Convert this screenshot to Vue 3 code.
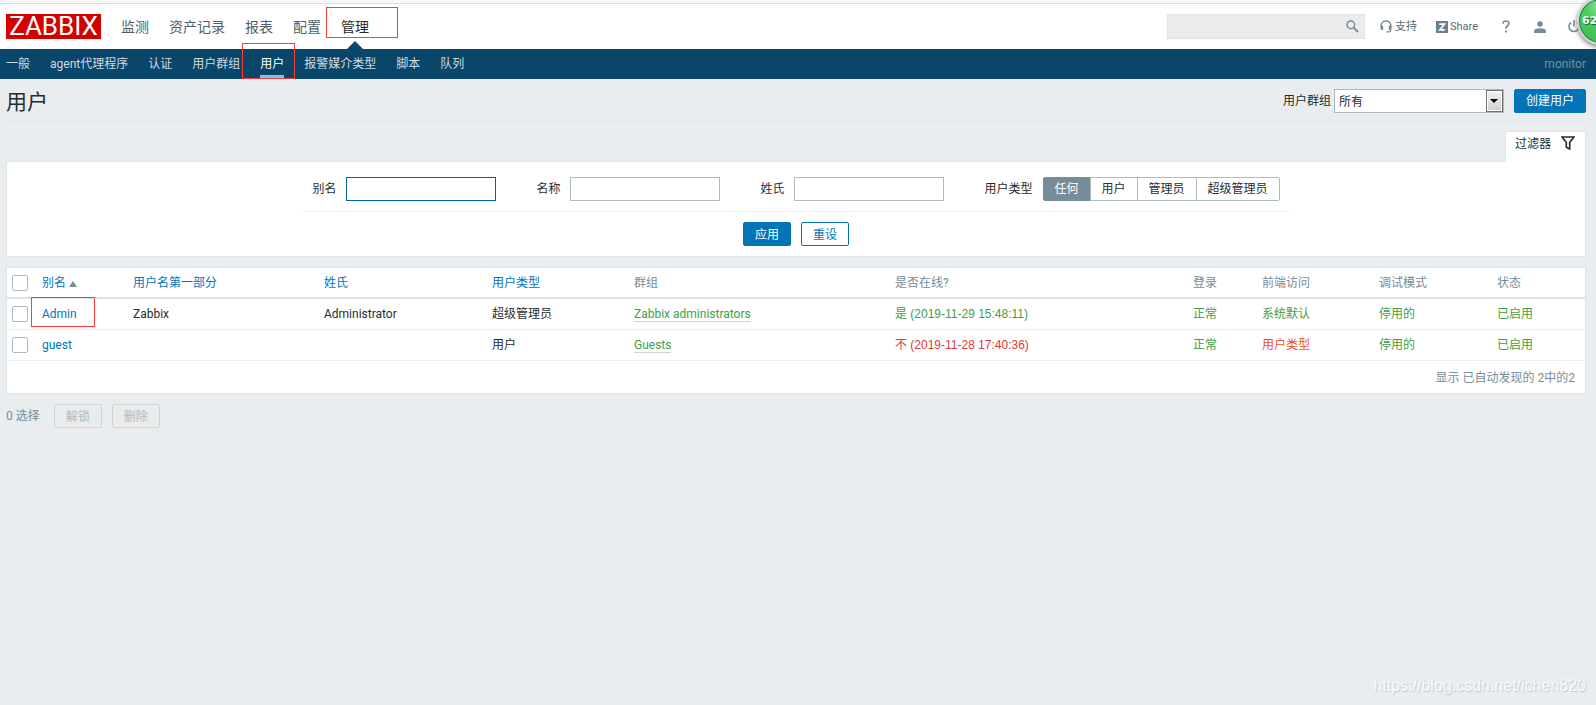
<script setup>
import { ref, computed } from 'vue'

const mainMenu = ['监测', '资产记录', '报表', '配置', '管理']
const subMenu = ['一般', 'agent代理程序', '认证', '用户群组', '用户', '报警媒介类型', '脚本', '队列']
const userTypes = ['任何', '用户', '管理员', '超级管理员']
const textFilters = [
  { id: 'alias', label: '别名' },
  { id: 'name', label: '名称' },
  { id: 'surname', label: '姓氏' },
]
const users = [
  {
    alias: 'Admin', name: 'Zabbix', surname: 'Administrator', type: '超级管理员',
    group: 'Zabbix administrators', online: true, onlineText: '是 (2019-11-29 15:48:11)',
    login: '正常', access: '系统默认', accessClass: 'green', debug: '停用的', status: '已启用', marked: true,
  },
  {
    alias: 'guest', name: '', surname: '', type: '用户',
    group: 'Guests', online: false, onlineText: '不 (2019-11-28 17:40:36)',
    login: '正常', access: '用户类型', accessClass: 'orange', debug: '停用的', status: '已启用', marked: false,
  },
]

const search = ref('')
const filters = ref({ alias: '', name: '', surname: '' })
const userType = ref('任何')
const selected = ref([])
const allSelected = computed({
  get: () => selected.value.length === users.length,
  set: (on) => { selected.value = on ? users.map((u) => u.alias) : [] },
})
function reset() {
  filters.value = { alias: '', name: '', surname: '' }
  userType.value = '任何'
}
</script>

<template>
  <div class="page">
    <div class="strip"></div>
    <header class="header">
      <a href="#" class="logo" aria-label="ZABBIX"><span>ZABBIX</span></a>
      <nav class="main-nav">
        <a v-for="item in mainMenu" :key="item" href="#" :class="{ active: item === '管理' }">{{ item }}<i v-if="item === '管理'" class="mark mark-main"></i></a>
      </nav>
      <div class="tools">
        <form class="search" @submit.prevent>
          <input v-model="search" type="text" aria-label="搜索">
          <button type="submit" aria-label="搜索">
            <svg width="13" height="13" viewBox="0 0 13 13" fill="none" stroke="#768d99"><circle cx="4.8" cy="4.8" r="3.8" stroke-width="1.4" /><path d="M7.6 7.6 12 12" stroke-width="2" /></svg>
          </button>
        </form>
        <a href="#" class="tool support">
          <svg width="12" height="13" viewBox="0 0 12 13"><path d="M1.2 7V5.6C1.2 2.9 3.3 1 6 1s4.8 1.9 4.8 4.6V7" fill="none" stroke="#768d99" stroke-width="1.5" /><path d="M.5 5.8h2.700v4.200H2Q.5 10 .5 8.600zM11.5 5.8h-2.700v4.200H10q1.5 0 1.5-1.400z" fill="#768d99" /><path d="M10.8 9v1.2q0 1.6-2 1.600H6.500" fill="none" stroke="#768d99" stroke-width="1.2" /></svg>
          支持
        </a>
        <a href="#" class="tool share">
          <svg width="12" height="12" viewBox="0 0 12 12"><rect width="12" height="12" fill="#68818e" /><path d="M3.2 3.2h5.2L3.8 8.9h5.1" fill="none" stroke="#fff" stroke-width="1.7" /></svg>
          Share
        </a>
        <a href="#" class="tool help" aria-label="帮助">
          <svg width="8" height="13" viewBox="0 0 8 13" fill="none" stroke="#768d99" stroke-width="1.7"><path d="M1 3.8C1 2 2.200 1 3.900 1s3 .9 3 2.600c0 2.200-2.900 2.200-2.900 4.600v.6" /><path d="M3 11.500h2" stroke-width="2" /></svg>
        </a>
        <a href="#" class="tool user" aria-label="用户资料">
          <svg width="12" height="12" viewBox="0 0 12 12" fill="#768d99"><circle cx="6" cy="3" r="2.800" /><path d="M0 12V10.300Q0 7.300 6 7.300T12 10.300V12z" /></svg>
        </a>
        <a href="#" class="tool power" aria-label="退出">
          <svg width="12" height="13" viewBox="0 0 12 13" fill="none" stroke="#768d99" stroke-width="1.600"><path d="M3 2.500a5 5 0 1 0 6 0M6 0v6.500" /></svg>
        </a>
      </div>
      <div class="bubble"><span>62</span></div>
    </header>

    <nav class="sub-nav">
      <a v-for="item in subMenu" :key="item" href="#" :class="{ active: item === '用户' }">{{ item }}<i v-if="item === '用户'" class="mark mark-sub"></i></a>
      <span class="server">monitor</span>
    </nav>

    <main class="content">
      <div class="title-bar">
        <h1>用户</h1>
        <form class="title-tools" @submit.prevent>
          <label for="group">用户群组</label>
          <span class="select">
            <select id="group"><option>所有</option></select>
            <i class="drop"></i>
          </span>
          <button type="button" class="btn primary create">创建用户</button>
        </form>
      </div>

      <div class="tab-row">
        <button type="button" class="filter-tab">
          过滤器
          <svg width="14" height="14" viewBox="0 0 14 14" fill="none" stroke="#1f2c33" stroke-width="1.600"><path d="M1 1h12L8.700 6.300V13L5.300 11.300V6.300z" /></svg>
        </button>
      </div>
      <form class="filter" @submit.prevent @reset.prevent="reset">
        <div class="fields">
          <div v-for="f in textFilters" :key="f.id" class="field">
            <label :for="f.id">{{ f.label }}</label>
            <input :id="f.id" v-model="filters[f.id]" type="text" :class="{ current: f.id === 'alias' }">
          </div>
          <div class="field" role="radiogroup" aria-labelledby="type-label">
            <span id="type-label" class="label">用户类型</span>
            <div class="segments">
              <label v-for="t in userTypes" :key="t"><input v-model="userType" type="radio" name="type" :value="t"><span>{{ t }}</span></label>
            </div>
          </div>
        </div>
        <div class="filter-buttons">
          <button type="submit" class="btn primary">应用</button>
          <button type="reset" class="btn">重设</button>
        </div>
      </form>

      <div class="table-box">
        <table>
          <colgroup>
            <col class="c-check"><col class="c-alias"><col class="c-name"><col class="c-surname"><col class="c-type"><col class="c-group"><col class="c-online"><col class="c-login"><col class="c-access"><col class="c-debug"><col class="c-status">
          </colgroup>
          <thead>
            <tr>
              <th class="check"><input v-model="allSelected" type="checkbox" aria-label="全选"></th>
              <th><a href="#">别名<i class="sort"></i></a></th>
              <th><a href="#">用户名第一部分</a></th>
              <th><a href="#">姓氏</a></th>
              <th><a href="#">用户类型</a></th>
              <th>群组</th>
              <th>是否在线?</th>
              <th>登录</th>
              <th>前端访问</th>
              <th>调试模式</th>
              <th>状态</th>
            </tr>
          </thead>
          <tbody>
            <tr v-for="u in users" :key="u.alias">
              <td class="check"><input v-model="selected" type="checkbox" :value="u.alias" :aria-label="u.alias"></td>
              <td class="alias"><a href="#">{{ u.alias }}</a><i v-if="u.marked" class="mark mark-row"></i></td>
              <td>{{ u.name }}</td>
              <td>{{ u.surname }}</td>
              <td>{{ u.type }}</td>
              <td><a href="#" class="green dotted">{{ u.group }}</a></td>
              <td class="time" :class="u.online ? 'green' : 'red'">{{ u.onlineText }}</td>
              <td class="green">{{ u.login }}</td>
              <td><a href="#" :class="u.accessClass">{{ u.access }}</a></td>
              <td><a href="#" class="green">{{ u.debug }}</a></td>
              <td class="green">{{ u.status }}</td>
            </tr>
          </tbody>
        </table>
        <div class="table-foot">显示 已自动发现的 2中的2</div>
      </div>

      <div class="actions">
        <span>{{ selected.length }} 选择</span>
        <button type="button" class="btn" :disabled="!selected.length">解锁</button>
        <button type="button" class="btn" :disabled="!selected.length">删除</button>
      </div>
    </main>
    <div class="watermark">https://blog.csdn.net/ichen820</div>
  </div>
</template>

<style>
body { background: #e9edf0; }
</style>

<style scoped>
.page, .page * { box-sizing: border-box; }
.page {
  position: relative;
  min-height: 100vh;
  overflow: hidden;
  background: #e9edf0;
  color: #1f2c33;
  font: 12px/16px Roboto, "Noto Sans CJK SC", sans-serif;
}
a { color: #0275b8; text-decoration: none; }
input, select, button { font: inherit; color: inherit; margin: 0; outline: none; }
button { cursor: pointer; }
svg { display: block; flex: none; }

.strip { height: 4px; background: #f8f8f8; border-bottom: 1px solid #ddd; }
.header {
  position: relative;
  display: flex;
  align-items: center;
  height: 45px;
  padding: 0 16px 0 6px;
  background: #fff;
}
.logo {
  display: flex;
  align-items: center;
  justify-content: center;
  width: 95px;
  height: 25px;
  background: #d40000;
  color: #fff;
  font: 26px/25px Roboto, sans-serif;
}
.main-nav { display: flex; gap: 20px; height: 100%; margin-left: 20px; }
.main-nav a { position: relative; color: #4f5f68; font-size: 14px; line-height: 46px; }
.main-nav .active { color: #1f2c33; }
.main-nav .active::after {
  content: "";
  position: absolute;
  left: 50%;
  bottom: 0;
  margin-left: -8px;
  border: 8px solid transparent;
  border-top: 0;
  border-bottom-color: #0a466a;
}
.mark { position: absolute; z-index: 2; border: 1px solid #fb3c3c; pointer-events: none; }
.mark-main { left: -15px; top: 3px; width: 72px; height: 31px; }
.mark-sub { left: -18px; top: -6px; width: 53px; height: 36px; }
.mark-row { left: -6px; top: -2px; width: 64px; height: 30px; }

.tools { display: flex; align-items: center; margin-left: auto; font-size: 11px; }
.search {
  display: flex;
  align-items: center;
  width: 198px;
  height: 25px;
  background: #ebebeb;
  border: 1px solid #dfe4e7;
}
.search input { flex: 1; min-width: 0; border: 0; background: none; padding: 0 6px; }
.search button { border: 0; background: none; padding: 0 5px; }
.tool { display: flex; align-items: center; gap: 3px; color: #586a74; }
.support { margin-left: 15px; }
.share { margin-left: 19px; gap: 2px; }
.help { margin-left: 24px; }
.user { margin-left: 24px; }
.power { margin-left: 22px; }
.bubble {
  position: absolute;
  right: -29px;
  top: -7px;
  width: 48px;
  height: 48px;
  padding-left: 3px;
  border-radius: 50%;
  border: 2px solid #cfd3d1;
  background: radial-gradient(circle at 50% 20%, #9be59a 0, #4fca5f 35%, #37bb52 100%);
  box-shadow: inset 0 0 0 1px #148044, 0 2px 5px #777;
  color: #fff;
  font: bold 11px/44px "DejaVu Sans", sans-serif;
  text-shadow: 1px 1px 1px #12662d;
  z-index: 3;
}

.sub-nav {
  display: flex;
  gap: 20px;
  height: 30px;
  padding: 0 10px 0 6px;
  background: #0a466a;
  line-height: 30px;
}
.sub-nav a { position: relative; color: #d0dbe1; }
.sub-nav .active { color: #fff; }
.sub-nav .active::after {
  content: "";
  position: absolute;
  inset: auto 0 1px;
  height: 3px;
  background: #7dc3f2;
}
.server { margin-left: auto; color: #768d99; }

.content { padding: 0 10px 0 6px; }
.title-bar {
  display: flex;
  align-items: flex-start;
  justify-content: space-between;
  height: 43px;
  padding-top: 10px;
  border-bottom: 1px solid #dfe4e7;
}
h1 { margin: 0; font-size: 21px; line-height: 26px; font-weight: 400; }
.title-tools { display: flex; align-items: center; }
.title-tools label { line-height: 24px; }
.select { position: relative; margin: 0 10px 0 3px; }
.select select {
  display: block;
  width: 170px;
  height: 24px;
  padding: 2px 20px 0 4px;
  appearance: none;
  border: 1px solid #acbbc2;
  border-radius: 0;
  background: #fff;
}
.drop {
  position: absolute;
  top: 1px;
  right: 1px;
  display: grid;
  place-items: center;
  width: 17px;
  height: 22px;
  border: 1px solid #707070;
  background: linear-gradient(#f2f2f2, #cfcfcf);
  box-shadow: inset 0 0 0 1px #fff;
  pointer-events: none;
}
.drop::after { content: ""; border: 4px solid transparent; border-top-color: #000; border-bottom: 0; }
.btn {
  height: 24px;
  padding: 1px 11px 0;
  border: 1px solid #0275b8;
  border-radius: 2px;
  background: #fff;
  color: #0275b8;
  line-height: 22px;
}
.btn.primary { background: #0275b8; color: #fff; }
.btn.create { padding-top: 0; }
.btn:disabled { background: #ebebeb; border-color: #ccd5d9; color: #acbbc2; }

.tab-row { display: flex; justify-content: flex-end; padding-top: 9px; }
.filter-tab {
  position: relative;
  display: flex;
  align-items: flex-start;
  gap: 10px;
  height: 31px;
  margin-bottom: -1px;
  padding: 4px 10px 0 9px;
  border: 1px solid #dfe4e7;
  border-bottom: 0;
  border-radius: 2px 2px 0 0;
  background: #fff;
}
.filter {
  padding: 15px 9px 10px;
  background: #fff;
  border: 1px solid #dfe4e7;
}
.fields {
  display: flex;
  gap: 40px;
  width: fit-content;
  margin: 0 auto;
  padding: 0 9px 10px;
  border-bottom: 1px solid #ebeef0;
}
.field { display: flex; align-items: center; gap: 10px; }
.field > input { width: 150px; height: 24px; padding: 0 5px; border: 1px solid #acbbc2; background: #fff; }
.field > .current { border-color: #02659f; }
.segments { display: flex; }
.segments input { position: absolute; opacity: 0; }
.segments span {
  display: block;
  height: 24px;
  margin-left: -1px;
  padding: 0 11px;
  border: 1px solid #acbbc2;
  line-height: 22px;
}
.segments label:first-child span { margin-left: 0; border-radius: 2px 0 0 2px; }
.segments label:last-child span { border-radius: 0 2px 2px 0; }
.segments input:checked + span { background: #768d99; border-color: #768d99; color: #fff; }
.filter-buttons { display: flex; justify-content: center; gap: 10px; padding-top: 10px; }

.table-box { margin-top: 10px; background: #fff; border: 1px solid #dfe4e7; }
table { width: 100%; table-layout: fixed; border-collapse: separate; border-spacing: 0; }
.c-check { width: 30px; }
.c-alias { width: 91px; }
.c-name { width: 191px; }
.c-surname { width: 168px; }
.c-type { width: 142px; }
.c-group { width: 261px; }
.c-online { width: 298px; }
.c-login { width: 69px; }
.c-access { width: 117px; }
.c-debug { width: 118px; }
.c-status { width: 93px; }
th, td { height: 31px; padding: 0 5px; text-align: left; font-weight: 400; border-bottom: 1px solid #ebeef0; }
th { color: #768d99; border-bottom: 2px solid #dce2e5; }
.check { padding: 0 0 0 5px; }
.check input {
  display: block;
  width: 16px;
  height: 16px;
  appearance: none;
  border: 1px solid #acbbc2;
  border-radius: 2px;
  background: #fff;
}
.check input:checked { box-shadow: inset 0 0 0 3px #fff; background: #0275b8; }
.sort { display: inline-block; margin-left: 3px; border: 4px solid transparent; border-top: 0; border-bottom: 6px solid #768d99; }
.alias { position: relative; }
.time { font-family: "Liberation Sans", Arial, "Noto Sans CJK SC", sans-serif; }
.green { color: #429e47; }
.red { color: #e33734; }
.orange { color: #f24f1d; }
.dotted { border-bottom: 1px solid #ccd5d9; }
.table-foot { height: 32px; padding: 0 10px; text-align: right; color: #768d99; line-height: 34px; }

.actions { display: flex; align-items: center; gap: 10px; padding-top: 10px; color: #768d99; }
.actions span { margin-right: 4px; line-height: 24px; }

.watermark {
  position: absolute;
  right: 10px;
  bottom: 9px;
  color: #f7f9fa;
  font: 16px/20px "Liberation Sans", Arial, sans-serif;
  text-shadow: 1px 1px 1px #c2c7ca;
}
</style>
